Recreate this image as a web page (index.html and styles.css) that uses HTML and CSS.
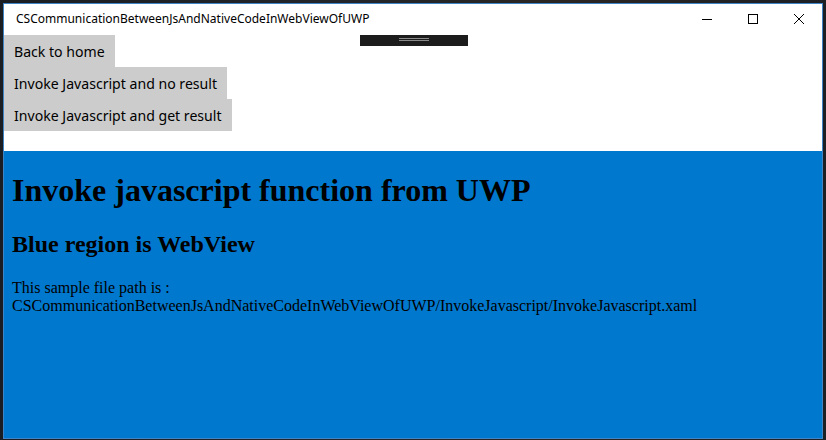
FILE: index.html
```html
<!DOCTYPE html>
<html>
<head>
<meta charset="utf-8">
<link rel="stylesheet" href="styles.css">
</head>
<body>
<div class="window">
  <div class="titlebar">
    <span class="title">CSCommunicationBetweenJsAndNativeCodeInWebViewOfUWP</span>
    <div class="controls">
      <div class="ctl"><svg width="10" height="10" viewBox="0 0 10 10"><path d="M0 5.5H10" stroke="#000" stroke-width="1"/></svg></div>
      <div class="ctl"><svg width="10" height="10" viewBox="0 0 10 10"><rect x="0.5" y="0.5" width="9" height="9" fill="none" stroke="#000" stroke-width="1"/></svg></div>
      <div class="ctl"><svg width="10" height="10" viewBox="0 0 10 10"><path d="M0 0L10 10M10 0L0 10" stroke="#000" stroke-width="1"/></svg></div>
    </div>
  </div>
  <div class="app">
    <div class="tabbar"><span class="grip"></span></div>
    <div class="buttons">
      <div class="btn">Back to home</div>
      <div class="btn">Invoke Javascript and no result</div>
      <div class="btn">Invoke Javascript and get result</div>
    </div>
    <div class="webview">
      <h1>Invoke javascript function from UWP</h1>
      <h2>Blue region is WebView</h2>
      <p>This sample file path is :<br>CSCommunicationBetweenJsAndNativeCodeInWebViewOfUWP/InvokeJavascript/InvokeJavascript.xaml</p>
    </div>
  </div>
</div>
</body>
</html>
```
FILE: styles.css
```css
html, body {
  margin: 0;
  padding: 0;
}
body {
  width: 826px;
  height: 440px;
  box-sizing: border-box;
  padding: 3px 3px 1px 3px;
  background: linear-gradient(90deg, #1a1d22 0%, #22252a 40%, #2a2522 70%, #1c1f24 100%);
  overflow: hidden;
}
.window {
  height: 436px;
  width: 820px;
  box-sizing: border-box;
  border: 1px solid #3f84c6;
  background: #fff;
  display: flex;
  flex-direction: column;
}
.titlebar {
  height: 31px;
  flex: none;
  display: flex;
  align-items: center;
  justify-content: space-between;
  font-family: "Noto Sans", sans-serif;
  font-size: 12px;
  color: #000;
}
.title {
  padding-left: 12px;
  margin-top: -3px;
}
.controls {
  display: flex;
  height: 100%;
}
.ctl {
  width: 46px;
  display: flex;
  align-items: center;
  justify-content: center;
  margin-top: -2px;
}
.ctl svg { display: block; }
.app {
  flex: 1;
  display: flex;
  flex-direction: column;
  position: relative;
}
.tabbar {
  position: absolute;
  left: 356px;
  top: 0;
  width: 108px;
  height: 11px;
  background: #1c1c1c;
  display: flex;
  justify-content: center;
}
.grip {
  margin-top: 3px;
  width: 30px;
  height: 1px;
  border-top: 1px solid #8a8a8a;
  border-bottom: 1px solid #8a8a8a;
}
.buttons {
  display: flex;
  flex-direction: column;
  align-items: flex-start;
  height: 116px;
  flex: none;
}
.btn {
  background: #cccccc;
  font-family: "Noto Sans", sans-serif;
  font-size: 14.1px;
  line-height: 20px;
  padding: 7px 10px 5px 10px;
  color: #000;
}
.webview {
  flex: 1;
  background: #0078ce;
  font-family: "Liberation Serif", serif;
  color: #000;
  padding: 0 8px;
  overflow: hidden;
}
.webview h1 {
  font-size: 32px;
  margin: 21px 0 0 0;
}
.webview h2 {
  font-size: 24px;
  margin: 22px 0 0 0;
}
.webview p {
  font-size: 16px;
  line-height: 18px;
  margin: 21px 0 0 0;
}
```
